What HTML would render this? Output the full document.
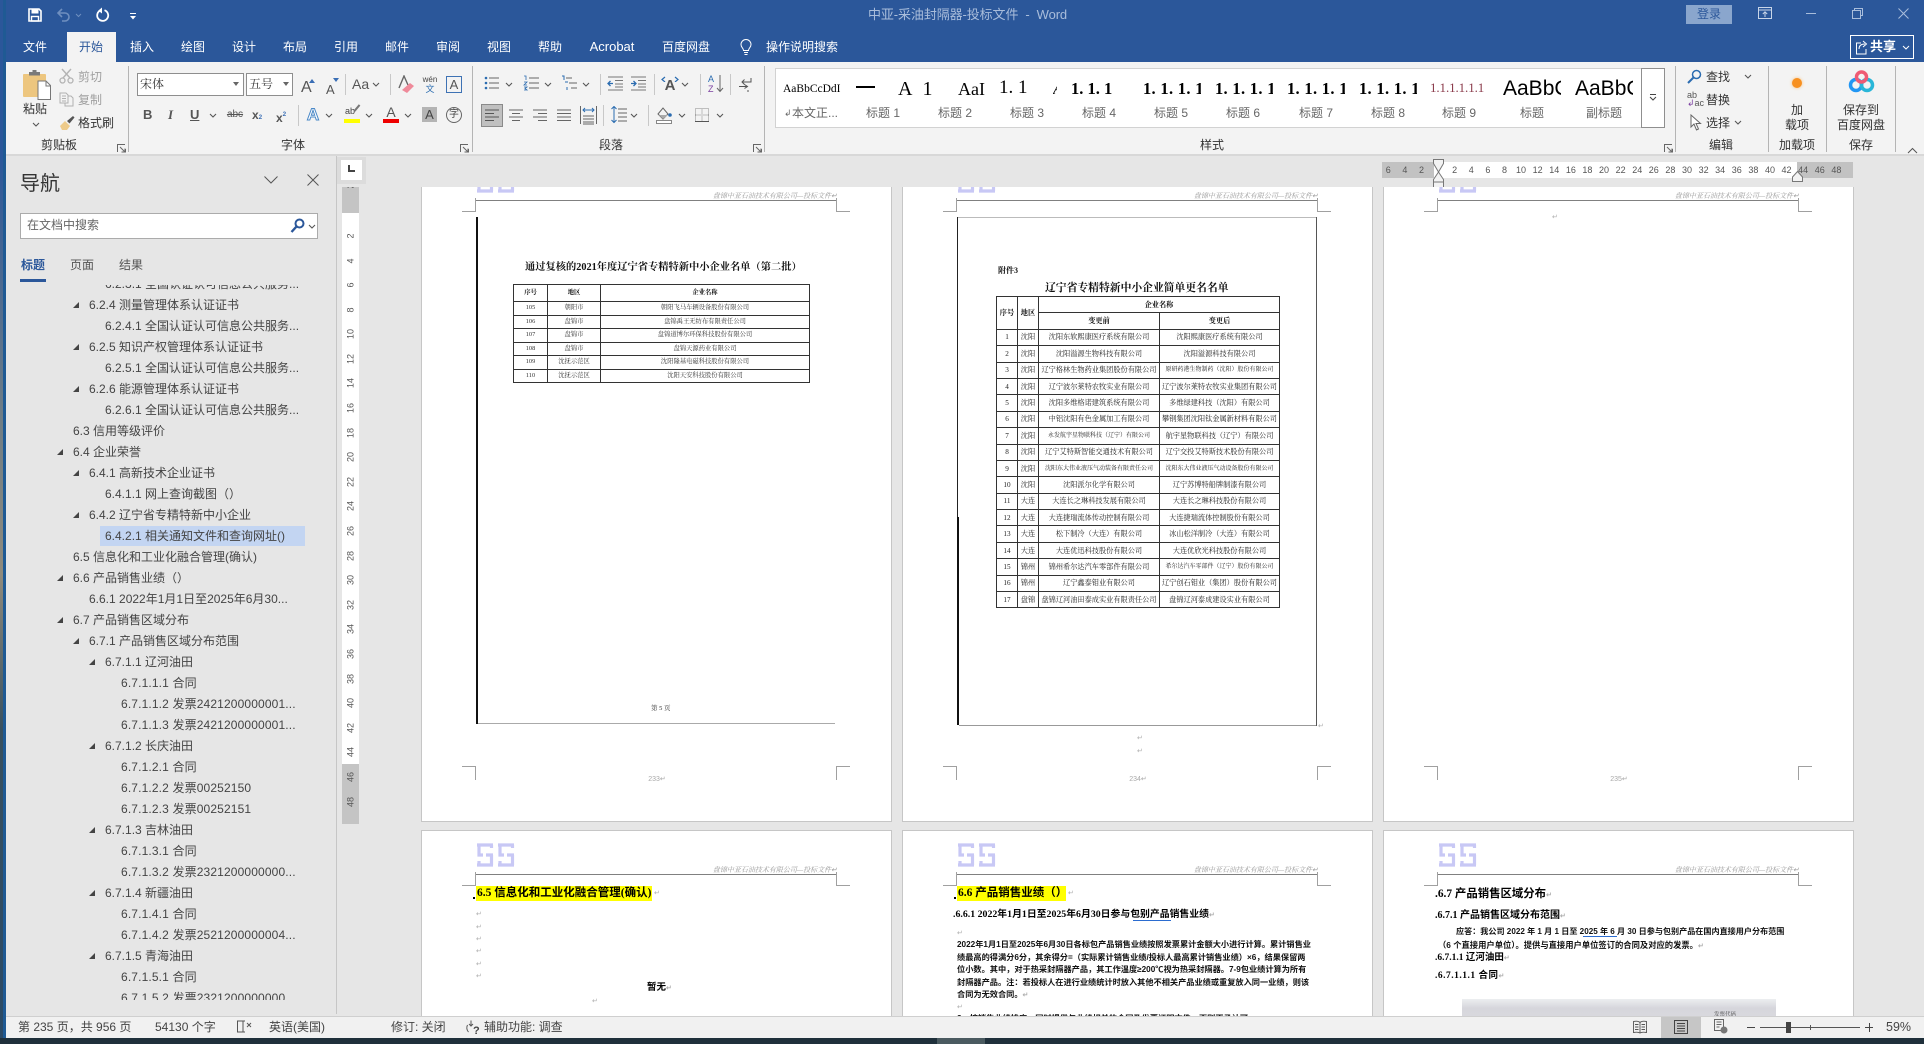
<!DOCTYPE html>
<html lang="zh"><head><meta charset="utf-8"><title>Word</title>
<style>
*{box-sizing:border-box}
html,body{margin:0;padding:0;width:1924px;height:1044px;overflow:hidden;background:#e6e6e6;font-family:"Liberation Sans","Noto Sans CJK SC",sans-serif}
.a{position:absolute;white-space:nowrap}
.c{transform:translateX(-50%)}
.tab{position:absolute;top:38px;color:#fff;font-size:12px;line-height:18px;transform:translateX(-50%);white-space:nowrap}
.r{position:absolute;font-size:12px;line-height:16px;color:#333;white-space:nowrap}
.g{color:#a0a0a0}
.cn{transform:translateX(-50%)}
.sep{position:absolute;width:1px;background:#c8c8c8}
.sep2{position:absolute;width:1px;top:66px;height:86px;background:#b4b4b4}
.sl{position:absolute;top:105px;font-size:12px;line-height:16px;color:#666;transform:translateX(-50%);white-space:nowrap}
.pv{position:absolute;overflow:hidden;white-space:nowrap;color:#000;text-align:left}
.se{font-family:"Liberation Serif","Noto Serif CJK SC",serif}
.n{height:21px;line-height:21px;font-size:12px;color:#444;position:relative;white-space:nowrap}
.l2{padding-left:73px}.l3{padding-left:89px}.l4{padding-left:105px}.l5{padding-left:121px;letter-spacing:.14px}
.n i{position:absolute;top:7px;width:0;height:0;border-bottom:6px solid #444;border-left:6px solid transparent}
.l2 i{left:57px}.l3 i{left:73px}.l4 i{left:89px}
.hr{position:absolute;left:1380px;top:162px;display:flex;font-size:9px;line-height:16px;color:#555}
.hr span{width:16.6px;text-align:center;flex:none}
.vr{position:absolute;left:342px;top:187px;width:17px;height:637px;overflow:hidden;font-size:9px;color:#555}
.vr span{position:absolute;left:0;width:17px;height:12px;line-height:12px;text-align:center;transform:rotate(-90deg)}
.pg{position:absolute;width:471px;height:666px;background:#fff;border:1px solid #c6c6c6;overflow:hidden}
.pg>*{position:absolute}
.hl{left:53px;top:43px;width:361px;height:1px;background:#808080}
.h{right:54px;top:34px;font-size:7px;line-height:10px;font-style:italic;color:#999;white-space:nowrap;font-family:"Liberation Serif","Noto Serif CJK SC",serif}
.m{background:#a0a0a0}
.m1{left:40px;top:54px;width:14px;height:1px}.m2{left:53px;top:41px;width:1px;height:14px}
.m3{left:414px;top:54px;width:14px;height:1px}.m4{left:414px;top:41px;width:1px;height:14px}
.m5{left:40px;top:609px;width:14px;height:1px}.m6{left:53px;top:609px;width:1px;height:14px}
.m7{left:414px;top:609px;width:14px;height:1px}.m8{left:414px;top:609px;width:1px;height:14px}
.pn{left:0;width:470px;top:618px;text-align:center;font-size:7px;line-height:10px;color:#a8a8a8}
.lg{left:55px;top:12px;width:38px;height:24px}
.sc{font-family:"Liberation Serif","Noto Serif CJK SC",serif;color:#222;filter:blur(.2px);white-space:nowrap}
table{border-collapse:collapse;table-layout:fixed}
td{border:1px solid #333;padding:0;text-align:center;overflow:hidden;white-space:nowrap}
.t1 td{font-size:6.3px;color:#333;line-height:10px}
.t2 td{font-size:7.2px;color:#222;line-height:10px;height:16.4px}
.sm{font-size:6px!important}
.b{font-weight:700;color:#111!important}
.ret{color:#b0b0b0;font-size:7px;line-height:9px;white-space:nowrap}
.hd{font-family:"Liberation Serif","Noto Sans CJK SC",sans-serif;font-weight:700;color:#000;white-space:nowrap}
.ye{background:#ff0;height:15px;line-height:15px;font-size:11.5px;padding-left:1px;overflow:hidden}
.bd{font-weight:700;color:#111;font-size:8.2px;line-height:10px;white-space:nowrap;font-family:"Liberation Sans","Noto Sans CJK SC",sans-serif}
.st{position:absolute;top:1019px;font-size:12px;line-height:17px;color:#444;white-space:nowrap}
</style></head><body>
<svg width="0" height="0" style="position:absolute">
<symbol id="ch" viewBox="0 0 8 5"><path d="M1 1l3 3 3-3" stroke="#555" stroke-width="1.1" fill="none"/></symbol>
<symbol id="la" viewBox="0 0 9 9"><path d="M.5 8V.5H8M3 3l5 5M8 4.5V8H4.5M8.5 5v3.5" stroke="#666" fill="none"/></symbol>
<symbol id="lg" viewBox="0 0 38 24"><g fill="none" stroke="#c8c8f5" stroke-width="3.2"><path d="M0 2h16M2 2v10h4M9 12h7M14.5 2v3M14.500 12v10M0 22h16M2 18v4"/><path d="M21 2h16M23 2v10h4M30 12h7M35.500 2v3M35.500 12v10M21 22h16M23 18v4"/></g></symbol>
</svg>

<!-- title bar -->
<div class="a" style="left:0;top:0;width:1924px;height:62px;background:#2b579a"></div>
<svg class="a" style="left:27px;top:7px" width="16" height="16" viewBox="0 0 16 16"><path d="M2 2h10l2 2v10H2z" fill="none" stroke="#fff" stroke-width="1.6"/><rect x="4.5" y="2" width="7" height="4.5" fill="#fff"/><rect x="4.5" y="9.5" width="7" height="4.5" fill="none" stroke="#fff" stroke-width="1.4"/></svg>
<svg class="a" style="left:56px;top:8px" width="26" height="14" viewBox="0 0 26 14"><path d="M6 1L2 5l4 4M2 5h7a4 4 0 0 1 0 8H6" fill="none" stroke="#6f8fbf" stroke-width="1.6"/><path d="M20 6l2.5 2.5L25 6" fill="none" stroke="#6f8fbf"/></svg>
<svg class="a" style="left:95px;top:7px" width="16" height="16" viewBox="0 0 16 16"><path d="M9.5 3.2A5.5 5.5 0 1 1 5 3.6" fill="none" stroke="#fff" stroke-width="1.8"/><path d="M7 .5v6L3.2 3.6z" fill="#fff"/></svg>
<svg class="a" style="left:129px;top:13px" width="8" height="7" viewBox="0 0 8 7"><path d="M1 .5h6" stroke="#fff"/><path d="M1 3h6L4 6.5z" fill="#fff"/></svg>
<div class="a" style="left:868px;top:6px;font-size:13px;line-height:18px;color:#a9bddb;letter-spacing:-.1px">中亚-采油封隔器-投标文件&nbsp; -&nbsp; Word</div>
<div class="a" style="left:1686px;top:5px;width:46px;height:19px;background:#8aa6cd;color:#2b579a;font-size:12px;line-height:19px;text-align:center">登录</div>
<svg class="a" style="left:1758px;top:7px" width="14" height="12" viewBox="0 0 14 12"><path d="M.5.5h13v11H.5zM.5 3h13M7 10V5M4.8 7L7 4.8 9.2 7" fill="none" stroke="#c8d5e8"/></svg>
<div class="a" style="left:1806px;top:13px;width:10px;height:1px;background:#a9bddb"></div>
<svg class="a" style="left:1852px;top:8px" width="11" height="11" viewBox="0 0 11 11"><path d="M2.5 2.5V.5h8v7h-2M.5 2.5h8v8h-8z" fill="none" stroke="#a9bddb"/></svg>
<svg class="a" style="left:1898px;top:8px" width="11" height="11" viewBox="0 0 11 11"><path d="M.5.5l10 10M10.500.5l-10 10" stroke="#a9bddb"/></svg>

<div class="a" style="left:67px;top:32px;width:49px;height:30px;background:#f3f3f3"></div>
<div class="tab" style="left:35px">文件</div>
<div class="tab" style="left:91px;color:#2b579a">开始</div>
<div class="tab" style="left:142px">插入</div>
<div class="tab" style="left:193px">绘图</div>
<div class="tab" style="left:244px">设计</div>
<div class="tab" style="left:295px">布局</div>
<div class="tab" style="left:346px">引用</div>
<div class="tab" style="left:397px">邮件</div>
<div class="tab" style="left:448px">审阅</div>
<div class="tab" style="left:499px">视图</div>
<div class="tab" style="left:550px">帮助</div>
<div class="tab" style="left:612px;font-size:13px">Acrobat</div>
<div class="tab" style="left:686px">百度网盘</div>
<svg class="a" style="left:739px;top:38px" width="14" height="18" viewBox="0 0 14 18"><path d="M4.500 12.500C4.500 10 2 9.500 2 6.500a5 5 0 0 1 10 0c0 3-2.500 3.500-2.500 6zM5 14.500h4M5.500 16.500h3" fill="none" stroke="#fff"/></svg>
<div class="tab" style="left:802px">操作说明搜索</div>
<div class="a" style="left:1850px;top:35px;width:64px;height:24px;border:1px solid #fff"></div>
<svg class="a" style="left:1855px;top:40px" width="14" height="15" viewBox="0 0 14 15"><path d="M6 3H1.500v11H11V9M4 9c0-4 3-5 6-5M8 1l3.500 3L8 7" fill="none" stroke="#fff"/></svg>
<div class="a" style="left:1870px;top:38px;color:#fff;font-size:13px;line-height:18px;font-weight:700">共享</div>
<svg class="a" style="left:1902px;top:45px" width="8" height="5"><path d="M1 1l3 3 3-3" stroke="#fff" fill="none"/></svg>

<!-- ribbon -->
<div class="a" style="left:0;top:62px;width:1924px;height:94px;background:#f3f3f3;border-bottom:2px solid #d8d8d8"></div>
<div class="sep2" style="left:128px"></div><div class="sep2" style="left:472px"></div><div class="sep2" style="left:764px"></div><div class="sep2" style="left:1675px"></div><div class="sep2" style="left:1768px"></div><div class="sep2" style="left:1826px"></div><div class="sep2" style="left:1895px"></div>

<!-- clipboard -->
<svg class="a" style="left:22px;top:69px" width="30" height="32" viewBox="0 0 30 32"><rect x="1" y="5" width="23" height="23" rx="1" fill="#edc67f"/><path d="M7 5V3h3.500V1h4v2H18v3.500H7z" fill="#7a7a7a"/><path d="M16 12h8l4.500 4.500V30.500H16z" fill="#fff" stroke="#777"/><path d="M24 12v5h4.500" fill="none" stroke="#777"/></svg>
<div class="r cn" style="left:35px;top:101px">粘贴</div>
<svg class="a" style="left:32px;top:122px" width="8" height="5"><use href="#ch"/></svg>
<svg class="a" style="left:59px;top:68px" width="15" height="16" viewBox="0 0 15 16"><path d="M3 1l8 9M12 1L4 10" stroke="#b4b4b4" stroke-width="1.4"/><circle cx="3.500" cy="12.500" r="2.500" fill="none" stroke="#b4b4b4" stroke-width="1.300"/><circle cx="11.500" cy="12.500" r="2.500" fill="none" stroke="#b4b4b4" stroke-width="1.300"/></svg>
<div class="r g" style="left:78px;top:69px">剪切</div>
<svg class="a" style="left:59px;top:92px" width="15" height="15" viewBox="0 0 15 15"><path d="M1 1h6l2 2v8H1zM9 4h3l2 2v8H6v-3M3 4h4M3 6.500h4M3 9h4" fill="none" stroke="#b0b0b0"/></svg>
<div class="r g" style="left:78px;top:92px">复制</div>
<svg class="a" style="left:59px;top:115px" width="16" height="16" viewBox="0 0 16 16"><path d="M1 11l5-5 5 5-3 4H3z" fill="#eecb8a"/><path d="M8 6l6-5 1.500 1.500-5 6z" fill="#555"/></svg>
<div class="r" style="left:78px;top:115px">格式刷</div>
<div class="r cn" style="left:59px;top:137px">剪贴板</div>
<svg class="a" style="left:117px;top:144px" width="9" height="9"><use href="#la"/></svg>

<!-- font -->
<div class="a" style="left:137px;top:73px;width:107px;height:23px;background:#fff;border:1px solid #8e8e8e"></div>
<div class="r" style="left:140px;top:76px;font-family:'Noto Serif CJK SC',serif">宋体</div>
<div class="a" style="left:233px;top:82px;width:0;height:0;border:3px solid transparent;border-top:4px solid #666"></div>
<div class="a" style="left:246px;top:73px;width:47px;height:23px;background:#fff;border:1px solid #8e8e8e"></div>
<div class="r" style="left:249px;top:76px;font-family:'Noto Serif CJK SC',serif">五号</div>
<div class="a" style="left:283px;top:82px;width:0;height:0;border:3px solid transparent;border-top:4px solid #666"></div>
<div class="a" style="left:301px;top:79px;font-size:16px;line-height:18px;color:#555">A</div><div class="a" style="left:309px;top:76px;width:0;height:0;border:3px solid transparent;border-bottom:4px solid #3a6eb5"></div>
<div class="a" style="left:326px;top:82px;font-size:13px;line-height:15px;color:#555">A</div><div class="a" style="left:333px;top:78px;width:0;height:0;border:3px solid transparent;border-top:4px solid #3a6eb5"></div>
<div class="sep" style="left:345px;top:74px;height:21px"></div>
<div class="a" style="left:352px;top:76px;font-size:14px;line-height:16px;color:#555">Aa</div><svg class="a" style="left:372px;top:82px" width="8" height="5"><use href="#ch"/></svg>
<div class="sep" style="left:390px;top:74px;height:21px"></div>
<svg class="a" style="left:398px;top:75px" width="17" height="18" viewBox="0 0 17 18"><path d="M1 13L6 1l4 9" fill="none" stroke="#666" stroke-width="1.4"/><path d="M4 15l8-7 4 3-7 7z" fill="#ef8a9a"/></svg>
<div class="a c" style="left:430px;top:75px;font-size:8px;line-height:9px;color:#444">wén</div><div class="a c" style="left:430px;top:84px;font-size:9px;line-height:10px;color:#2b6cb0">文</div>
<div class="a" style="left:446px;top:76px;width:16px;height:17px;border:1px solid #3e72b4;font-size:13px;line-height:15px;text-align:center;color:#555">A</div>
<div class="a" style="left:143px;top:106px;font-size:13px;line-height:18px;font-weight:700;color:#555;font-family:'Liberation Sans'">B</div>
<div class="a" style="left:168px;top:106px;font-size:13px;line-height:18px;font-style:italic;font-family:'Liberation Serif';font-weight:700;color:#555">I</div>
<div class="a" style="left:190px;top:106px;font-size:13px;line-height:18px;font-weight:700;color:#555;text-decoration:underline">U</div>
<svg class="a" style="left:209px;top:113px" width="8" height="5"><use href="#ch"/></svg>
<div class="a c" style="left:235px;top:108px;font-size:10px;line-height:14px;color:#555;text-decoration:line-through">abc</div>
<div class="a" style="left:252px;top:107px;font-size:12px;line-height:16px;color:#555;font-weight:700">x<span style="font-size:6px;color:#3a6eb5">2</span></div>
<div class="a" style="left:276px;top:107px;font-size:12px;line-height:16px;color:#555;font-weight:700">x<span style="font-size:6px;color:#3a6eb5;vertical-align:6px">2</span></div>
<div class="sep" style="left:298px;top:105px;height:21px"></div>
<div class="a c" style="left:313px;top:105px;font-size:17px;line-height:20px;color:#fff;font-weight:700;-webkit-text-stroke:1px #4a88c7">A</div><svg class="a" style="left:325px;top:113px" width="8" height="5"><use href="#ch"/></svg>
<div class="a c" style="left:350px;top:106px;font-size:9px;line-height:11px;color:#444">ab</div><div class="a" style="left:344px;top:119px;width:16px;height:4px;background:#ff0"></div>
<div class="a" style="left:353px;top:107px;width:8px;height:2px;background:#777;transform:rotate(-50deg)"></div>
<svg class="a" style="left:365px;top:113px" width="8" height="5"><use href="#ch"/></svg>
<div class="a c" style="left:391px;top:104px;font-size:14px;line-height:16px;color:#555">A</div><div class="a" style="left:383px;top:119px;width:16px;height:4px;background:#e00"></div>
<svg class="a" style="left:404px;top:113px" width="8" height="5"><use href="#ch"/></svg>
<div class="a" style="left:422px;top:107px;width:15px;height:15px;background:#b4b4b4;color:#444;font-size:13px;line-height:15px;text-align:center">A</div>
<div class="a" style="left:446px;top:107px;width:16px;height:16px;border:1px solid #666;border-radius:50%;font-size:10px;line-height:14px;text-align:center;color:#444">字</div>
<div class="r cn" style="left:293px;top:137px">字体</div>
<svg class="a" style="left:460px;top:144px" width="9" height="9"><use href="#la"/></svg>

<!-- paragraph -->
<svg class="a" style="left:484px;top:75px" width="16" height="16" viewBox="0 0 16 16"><path d="M5 3h10M5 8h10M5 13h10" stroke="#666"/><circle cx="2" cy="3" r="1.300" fill="#2b6cb0"/><circle cx="2" cy="8" r="1.300" fill="#2b6cb0"/><circle cx="2" cy="13" r="1.300" fill="#2b6cb0"/></svg><svg class="a" style="left:505px;top:82px" width="8" height="5"><use href="#ch"/></svg>
<svg class="a" style="left:523px;top:75px" width="16" height="16" viewBox="0 0 16 16"><path d="M6 3h10M6 8h10M6 13h10" stroke="#666"/><path d="M1 1h2v4M1 7h3l-3 3h3M1 12h3l-2 1.500 2 1.500H1" fill="none" stroke="#2b6cb0" stroke-width=".8"/></svg><svg class="a" style="left:544px;top:82px" width="8" height="5"><use href="#ch"/></svg>
<svg class="a" style="left:561px;top:75px" width="16" height="16" viewBox="0 0 16 16"><path d="M5 3h6M8 8h8M10 13h6" stroke="#666"/><path d="M1 1h2v4M4 7h3M6 12v3" fill="none" stroke="#2b6cb0"/></svg><svg class="a" style="left:582px;top:82px" width="8" height="5"><use href="#ch"/></svg>
<div class="sep" style="left:600px;top:74px;height:21px"></div>
<svg class="a" style="left:607px;top:76px" width="16" height="15" viewBox="0 0 16 15"><path d="M1 1h15M8 4.500h8M8 8h8M8 11h8M1 14h15" stroke="#777"/><path d="M6 7.500H1M3.500 5L1 7.500 3.500 10" fill="none" stroke="#2b6cb0" stroke-width="1.300"/></svg>
<svg class="a" style="left:630px;top:76px" width="16" height="15" viewBox="0 0 16 15"><path d="M1 1h15M8 4.500h8M8 8h8M8 11h8M1 14h15" stroke="#777"/><path d="M1 7.500h5M3.500 5L6 7.500 3.500 10" fill="none" stroke="#2b6cb0" stroke-width="1.300"/></svg>
<div class="sep" style="left:654px;top:74px;height:21px"></div>
<div class="a c" style="left:670px;top:78px;font-size:15px;line-height:15px;font-weight:700;color:#555">A</div><svg class="a" style="left:661px;top:76px" width="18" height="6" viewBox="0 0 18 6"><path d="M4 1L1 3.500 4 6M14 1l3 2.500L14 6" fill="none" stroke="#2b6cb0" stroke-width="1.200"/></svg><svg class="a" style="left:681px;top:82px" width="8" height="5"><use href="#ch"/></svg>
<div class="sep" style="left:700px;top:74px;height:21px"></div>
<div class="a" style="left:708px;top:74px;font-size:9px;line-height:10px;color:#2b6cb0">A</div><div class="a" style="left:708px;top:84px;font-size:9px;line-height:10px;color:#7b3fa0">Z</div>
<svg class="a" style="left:716px;top:75px" width="8" height="18" viewBox="0 0 8 18"><path d="M4 0v16M1 13l3 3.500L7 13" fill="none" stroke="#666"/></svg>
<div class="sep" style="left:730px;top:74px;height:21px"></div>
<svg class="a" style="left:739px;top:77px" width="13" height="15" viewBox="0 0 13 15"><path d="M12 1v4H3M5.500 2.500L3 5l2.500 2.500M0 9.500h8M5.500 7.500l3 2-3 2M9 13v2" fill="none" stroke="#555"/></svg>
<div class="a" style="left:481px;top:104px;width:22px;height:23px;background:#c0c0c0;border:1px solid #8a8a8a"></div>
<svg class="a" style="left:484px;top:109px" width="16" height="13" viewBox="0 0 16 13"><path d="M1 1h14M1 4.500h9M1 8h14M1 11.500h9" stroke="#555"/></svg>
<svg class="a" style="left:508px;top:109px" width="16" height="13" viewBox="0 0 16 13"><path d="M1 1h14M4 4.500h8M1 8h14M4 11.500h8" stroke="#666"/></svg>
<svg class="a" style="left:532px;top:109px" width="16" height="13" viewBox="0 0 16 13"><path d="M1 1h14M6 4.500h9M1 8h14M6 11.500h9" stroke="#666"/></svg>
<svg class="a" style="left:556px;top:109px" width="16" height="13" viewBox="0 0 16 13"><path d="M1 1h14M1 4.500h14M1 8h14M1 11.500h14" stroke="#666"/></svg>
<svg class="a" style="left:580px;top:105px" width="17" height="20" viewBox="0 0 17 20"><path d="M.5 1v18M16.500 1v18M3 11h11M3 14h11M3 17h11M3 19h11" stroke="#666"/><path d="M3 5h11M5 3L3 5l2 2M12 3l2 2-2 2" fill="none" stroke="#2b6cb0"/></svg>
<div class="sep" style="left:603px;top:105px;height:21px"></div>
<svg class="a" style="left:611px;top:106px" width="16" height="18" viewBox="0 0 16 18"><path d="M7 3h9M7 7h9M7 11h9M7 15h9" stroke="#666"/><path d="M3 0v17M.5 3L3 .5 5.500 3M.5 14L3 16.500 5.500 14" fill="none" stroke="#2b6cb0"/></svg><svg class="a" style="left:630px;top:113px" width="8" height="5"><use href="#ch"/></svg>
<div class="sep" style="left:648px;top:105px;height:21px"></div>
<svg class="a" style="left:656px;top:106px" width="16" height="18" viewBox="0 0 16 18"><path d="M2 8l5-6 5 6-5 5z" fill="none" stroke="#666"/><path d="M3 9h9l-5 4z" fill="#aaa"/><circle cx="14" cy="9" r="1.800" fill="#2b6cb0"/><rect x=".5" y="14.500" width="15" height="3" fill="#fff" stroke="#888"/></svg><svg class="a" style="left:678px;top:113px" width="8" height="5"><use href="#ch"/></svg>
<svg class="a" style="left:695px;top:108px" width="14" height="14" viewBox="0 0 14 14"><path d="M.5.500h13v13H.5zM7 .5v13M.5 7h13" fill="none" stroke="#888" stroke-dasharray="1 1"/><path d="M0 13.500h14" stroke="#555"/></svg><svg class="a" style="left:716px;top:113px" width="8" height="5"><use href="#ch"/></svg>
<div class="r cn" style="left:611px;top:137px">段落</div>
<svg class="a" style="left:753px;top:144px" width="9" height="9"><use href="#la"/></svg>

<!-- styles -->
<div class="a" style="left:775px;top:68px;width:867px;height:60px;background:#fff;border:1px solid #d2d2d2"></div>
<div class="a" style="left:1641px;top:68px;width:24px;height:60px;background:#fff;border:1px solid #8f8f8f"></div>
<svg class="a" style="left:1649px;top:94px" width="8" height="8" viewBox="0 0 8 8"><path d="M1 .5h6M1 3l3 3 3-3" fill="none" stroke="#444"/></svg>
<div class="pv se" style="left:783px;top:80px;width:59px;font-size:11.5px;line-height:18px">AaBbCcDdI</div>
<div class="a" style="left:856px;top:86px;width:19px;height:1.500px;background:#000"></div>
<div class="pv se" style="left:898px;top:75px;width:40px;font-size:20px;line-height:28px">A&nbsp;&nbsp;1</div>
<div class="pv se" style="left:958px;top:76px;width:29px;font-size:18px;line-height:26px">AaI</div>
<div class="pv se" style="left:999px;top:75px;width:33px;font-size:19px;line-height:26px">1. 1</div>
<div class="pv se" style="left:1053px;top:77px;width:4px;font-size:17px;line-height:24px;font-style:italic">A</div>
<div class="pv se" style="left:1071px;top:78px;width:46px;font-size:16.500px;line-height:22px;font-weight:700">1. 1. 1</div>
<div class="pv se" style="left:1143px;top:78px;width:58px;font-size:16.500px;line-height:22px;font-weight:700;letter-spacing:.3px">1. 1. 1. 1</div>
<div class="pv se" style="left:1215px;top:78px;width:58px;font-size:16.500px;line-height:22px;font-weight:700;letter-spacing:.3px">1. 1. 1. 1</div>
<div class="pv se" style="left:1287px;top:78px;width:58px;font-size:16.500px;line-height:22px;font-weight:700;letter-spacing:.3px">1. 1. 1. 1</div>
<div class="pv se" style="left:1359px;top:78px;width:58px;font-size:16.500px;line-height:22px;font-weight:700;letter-spacing:.3px">1. 1. 1. 1</div>
<div class="pv se" style="left:1430px;top:80px;width:60px;font-size:13px;line-height:16px;color:#8a3a4a;letter-spacing:-.1px">1.1.1.1.1.1</div>
<div class="pv" style="left:1503px;top:75px;width:58px;font-size:21px;line-height:28px">AaBbC</div>
<div class="pv" style="left:1575px;top:75px;width:58px;font-size:21px;line-height:28px">AaBbC</div>
<div class="sl" style="left:815px">本文正...</div><div class="a" style="left:784px;top:107px;font-size:9px;line-height:12px;color:#666">↲</div>
<div class="sl" style="left:883px">标题 1</div><div class="sl" style="left:955px">标题 2</div><div class="sl" style="left:1027px">标题 3</div><div class="sl" style="left:1099px">标题 4</div><div class="sl" style="left:1171px">标题 5</div><div class="sl" style="left:1243px">标题 6</div><div class="sl" style="left:1316px">标题 7</div><div class="sl" style="left:1388px">标题 8</div><div class="sl" style="left:1459px">标题 9</div><div class="sl" style="left:1532px">标题</div><div class="sl" style="left:1604px">副标题</div>
<div class="r cn" style="left:1212px;top:137px">样式</div>
<svg class="a" style="left:1664px;top:144px" width="9" height="9"><use href="#la"/></svg>

<!-- editing -->
<svg class="a" style="left:1687px;top:69px" width="15" height="15" viewBox="0 0 15 15"><circle cx="9.500" cy="5.500" r="4" fill="none" stroke="#2b6cb0" stroke-width="1.500"/><path d="M6.500 8.500L1 14" stroke="#2b6cb0" stroke-width="2"/></svg>
<div class="r" style="left:1706px;top:69px">查找</div><svg class="a" style="left:1744px;top:74px" width="8" height="5"><use href="#ch"/></svg>
<div class="a" style="left:1687px;top:91px;font-size:9px;line-height:8px;color:#555">ab<br><span style="color:#7b3fa0">↲</span>ac</div>
<div class="r" style="left:1706px;top:92px">替换</div>
<svg class="a" style="left:1690px;top:114px" width="12" height="17" viewBox="0 0 12 17"><path d="M1 1v12l3-3 2.500 6 2-1L6 9.500h4.500z" fill="#fff" stroke="#666"/></svg>
<div class="r" style="left:1706px;top:115px">选择</div><svg class="a" style="left:1734px;top:120px" width="8" height="5"><use href="#ch"/></svg>
<div class="r cn" style="left:1721px;top:137px">编辑</div>
<div class="a" style="left:1792px;top:78px;width:10px;height:10px;border-radius:50%;background:#f79020;box-shadow:0 0 3px #fbc07a"></div>
<div class="r cn" style="left:1797px;top:102px">加</div><div class="r cn" style="left:1797px;top:117px">载项</div>
<div class="r cn" style="left:1797px;top:137px">加载项</div>
<svg class="a" style="left:1848px;top:70px" width="27" height="24" viewBox="0 0 27 24"><circle cx="8" cy="15" r="5.500" fill="none" stroke="#2196f3" stroke-width="3.500"/><circle cx="19" cy="15" r="5.500" fill="none" stroke="#29b6d8" stroke-width="3.500"/><circle cx="13.500" cy="7" r="5" fill="none" stroke="#ef5b74" stroke-width="3.500"/></svg>
<div class="r cn" style="left:1861px;top:102px">保存到</div><div class="r cn" style="left:1861px;top:117px">百度网盘</div>
<div class="r cn" style="left:1861px;top:137px">保存</div>
<svg class="a" style="left:1907px;top:147px" width="11" height="7" viewBox="0 0 11 7"><path d="M1 6l4.500-4.500L10 6" fill="none" stroke="#555"/></svg>

<!-- rulers -->
<div class="a" style="left:1382px;top:162px;width:471px;height:16px;background:#c2c2c2"></div>
<div class="a" style="left:1434px;top:162px;width:363px;height:16px;background:#fff"></div>
<div class="hr"><span>6</span><span>4</span><span>2</span><span></span><span>2</span><span>4</span><span>6</span><span>8</span><span>10</span><span>12</span><span>14</span><span>16</span><span>18</span><span>20</span><span>22</span><span>24</span><span>26</span><span>28</span><span>30</span><span>32</span><span>34</span><span>36</span><span>38</span><span>40</span><span>42</span><span>44</span><span>46</span><span>48</span></div>
<svg class="a" style="left:1432px;top:159px" width="13" height="29" viewBox="0 0 13 29"><path d="M1.500.5h10v4L6.500 13 1.500 4.500z" fill="#f3f3f3" stroke="#777"/><path d="M6.500 13l5 7.500v2.500h-10v-2.500z" fill="#f3f3f3" stroke="#777"/><rect x="1.500" y="23" width="10" height="5.500" fill="#f3f3f3" stroke="#777"/></svg>
<svg class="a" style="left:1792px;top:171px" width="11" height="11" viewBox="0 0 11 11"><path d="M5.500.5L10.500 6v4.500H.5V6z" fill="#f3f3f3" stroke="#777"/></svg>

<div class="a" style="left:337px;top:157px;width:29px;height:27px;background:#dcdcdc"></div>
<div class="a" style="left:341px;top:160px;width:21px;height:20px;background:#fff"></div>
<svg class="a" style="left:348px;top:165px" width="7" height="7" viewBox="0 0 7 7"><path d="M1 0v6h6" fill="none" stroke="#444" stroke-width="2"/></svg>
<div class="a" style="left:342px;top:187px;width:17px;height:26px;background:#c4c4c4"></div>
<div class="a" style="left:342px;top:213px;width:17px;height:551px;background:#fff"></div>
<div class="a" style="left:342px;top:764px;width:17px;height:60px;background:#c4c4c4"></div>
<div class="vr">
<span style="top:-7px">2</span><span style="top:43px">2</span><span style="top:68px">4</span><span style="top:92px">6</span><span style="top:117px">8</span><span style="top:141px">10</span><span style="top:166px">12</span><span style="top:190px">14</span><span style="top:215px">16</span><span style="top:240px">18</span><span style="top:264px">20</span><span style="top:289px">22</span><span style="top:313px">24</span><span style="top:338px">26</span><span style="top:363px">28</span><span style="top:387px">30</span><span style="top:412px">32</span><span style="top:436px">34</span><span style="top:461px">36</span><span style="top:486px">38</span><span style="top:510px">40</span><span style="top:535px">42</span><span style="top:559px">44</span><span style="top:584px">46</span><span style="top:609px">48</span>
</div>

<!-- navigation -->
<div class="a" style="left:0;top:0;width:3px;height:1044px;background:linear-gradient(#2b579a 0,#2b579a 15%,#6f7d85 40%,#8f8a7c 55%,#39505e 70%,#2b4a66 100%)"></div>
<div class="a" style="left:3px;top:0;width:3px;height:1044px;background:#1f5a94"></div>
<div class="a" style="left:336px;top:156px;width:1px;height:858px;background:#c6c6c6"></div>
<div class="a" style="left:20px;top:171px;font-size:20px;line-height:27px;color:#333">导航</div>
<svg class="a" style="left:264px;top:176px" width="14" height="8" viewBox="0 0 14 8"><path d="M.5.5L7 7 13.500.5" fill="none" stroke="#555"/></svg>
<svg class="a" style="left:307px;top:174px" width="12" height="12" viewBox="0 0 12 12"><path d="M.5.5l11 11M11.500.5l-11 11" stroke="#555"/></svg>
<div class="a" style="left:20px;top:213px;width:298px;height:26px;background:#fff;border:1px solid #ababab"></div>
<div class="a" style="left:27px;top:215px;font-size:12px;line-height:20px;color:#666">在文档中搜索</div>
<svg class="a" style="left:290px;top:218px" width="15" height="15" viewBox="0 0 15 15"><circle cx="9.500" cy="5.500" r="4" fill="none" stroke="#2b579a" stroke-width="2"/><path d="M6.500 8.500L1.500 14" stroke="#2b579a" stroke-width="2.400"/></svg>
<svg class="a" style="left:308px;top:224px" width="8" height="5"><use href="#ch"/></svg>
<div class="a" style="left:21px;top:256px;font-size:12px;line-height:18px;color:#2b579a;font-weight:700">标题</div>
<div class="a" style="left:20px;top:279px;width:26px;height:3px;background:#2b579a"></div>
<div class="a" style="left:70px;top:256px;font-size:12px;line-height:18px;color:#555">页面</div>
<div class="a" style="left:119px;top:256px;font-size:12px;line-height:18px;color:#555">结果</div>
<div class="a" style="left:100px;top:526px;width:205px;height:20px;background:#c3d5f2"></div>
<div class="a" style="left:0;top:285px;width:336px;height:715px;overflow:hidden">
<div style="margin-top:-11px">
<div class="n l4">6.2.3.1 全国认证认可信息公共服务...</div>
<div class="n l3"><i></i>6.2.4 测量管理体系认证证书</div>
<div class="n l4">6.2.4.1 全国认证认可信息公共服务...</div>
<div class="n l3"><i></i>6.2.5 知识产权管理体系认证证书</div>
<div class="n l4">6.2.5.1 全国认证认可信息公共服务...</div>
<div class="n l3"><i></i>6.2.6 能源管理体系认证证书</div>
<div class="n l4">6.2.6.1 全国认证认可信息公共服务...</div>
<div class="n l2">6.3 信用等级评价</div>
<div class="n l2"><i></i>6.4 企业荣誉</div>
<div class="n l3"><i></i>6.4.1 高新技术企业证书</div>
<div class="n l4">6.4.1.1 网上查询截图（）</div>
<div class="n l3"><i></i>6.4.2 辽宁省专精特新中小企业</div>
<div class="n l4">6.4.2.1 相关通知文件和查询网址()</div>
<div class="n l2">6.5 信息化和工业化融合管理(确认)</div>
<div class="n l2"><i></i>6.6 产品销售业绩（）</div>
<div class="n l3">6.6.1 2022年1月1日至2025年6月30...</div>
<div class="n l2"><i></i>6.7 产品销售区域分布</div>
<div class="n l3"><i></i>6.7.1 产品销售区域分布范围</div>
<div class="n l4"><i></i>6.7.1.1 辽河油田</div>
<div class="n l5">6.7.1.1.1 合同</div>
<div class="n l5">6.7.1.1.2 发票2421200000001...</div>
<div class="n l5">6.7.1.1.3 发票2421200000001...</div>
<div class="n l4"><i></i>6.7.1.2 长庆油田</div>
<div class="n l5">6.7.1.2.1 合同</div>
<div class="n l5">6.7.1.2.2 发票00252150</div>
<div class="n l5">6.7.1.2.3 发票00252151</div>
<div class="n l4"><i></i>6.7.1.3 吉林油田</div>
<div class="n l5">6.7.1.3.1 合同</div>
<div class="n l5">6.7.1.3.2 发票2321200000000...</div>
<div class="n l4"><i></i>6.7.1.4 新疆油田</div>
<div class="n l5">6.7.1.4.1 合同</div>
<div class="n l5">6.7.1.4.2 发票2521200000004...</div>
<div class="n l4"><i></i>6.7.1.5 青海油田</div>
<div class="n l5">6.7.1.5.1 合同</div>
<div class="n l5">6.7.1.5.2 发票2321200000000</div>
</div></div>

<!-- document -->
<div class="a" style="left:0;top:187px;width:1924px;height:830px;overflow:hidden">
<!-- page 233 -->
<div class="pg" style="left:421px;top:-31px">
<svg class="lg"><use href="#lg"/></svg><div class="h">盘锦中亚石油技术有限公司—投标文件↵</div><div class="hl"></div>
<div class="m m1"></div><div class="m m2"></div><div class="m m3"></div><div class="m m4"></div><div class="m m5"></div><div class="m m6"></div><div class="m m7"></div><div class="m m8"></div>
<div style="left:54px;top:60px;width:2px;height:507px;background:#111"></div>
<div style="left:56px;top:566px;width:357px;height:1px;background:#aaa"></div>
<div class="sc" style="left:103px;top:104px;font-size:10.250px;line-height:14px;font-weight:700;color:#111">通过复核的2021年度辽宁省专精特新中小企业名单（第二批）</div>
<table class="t1 sc" style="left:91px;top:127px;width:297px">
<col style="width:34px"><col style="width:53px"><col>
<tr style="height:17px"><td class="b">序号</td><td class="b">地区</td><td class="b">企业名称</td></tr>
<tr style="height:13.500px"><td>105</td><td>朝阳市</td><td>朝阳飞马车辆设备股份有限公司</td></tr>
<tr style="height:13.500px"><td>106</td><td>盘锦市</td><td>盘锦禹王无纺布有限责任公司</td></tr>
<tr style="height:13.500px"><td>107</td><td>盘锦市</td><td>盘锦道博尔环保科技股份有限公司</td></tr>
<tr style="height:13.500px"><td>108</td><td>盘锦市</td><td>盘锦天源药业有限公司</td></tr>
<tr style="height:13.500px"><td>109</td><td>沈抚示范区</td><td>沈阳隆基电磁科技股份有限公司</td></tr>
<tr style="height:13.500px"><td>110</td><td>沈抚示范区</td><td>沈阳天安科技股份有限公司</td></tr>
</table>
<div class="sc" style="left:229px;top:547px;font-size:6.500px;line-height:9px;color:#333">第 5 页</div>
<div class="pn">233↵</div>
</div>
<!-- page 234 -->
<div class="pg" style="left:902px;top:-31px">
<svg class="lg"><use href="#lg"/></svg><div class="h">盘锦中亚石油技术有限公司—投标文件↵</div><div class="hl"></div>
<div class="m m1"></div><div class="m m2"></div><div class="m m3"></div><div class="m m4"></div><div class="m m5"></div><div class="m m6"></div><div class="m m7"></div><div class="m m8"></div>
<div style="left:54px;top:60px;width:1px;height:300px;background:#222"></div>
<div style="left:54px;top:360px;width:2px;height:208px;background:#111"></div>
<div style="left:55px;top:60px;width:358px;height:1px;background:#bbb"></div>
<div style="left:413px;top:60px;width:1px;height:509px;background:#555"></div>
<div style="left:56px;top:568px;width:357px;height:1px;background:#999"></div>
<div class="ret" style="left:415px;top:565px">↵</div>
<div class="sc b" style="left:95px;top:108px;font-size:8px;line-height:11px;font-weight:700">附件3</div>
<div class="sc b" style="left:142px;top:124px;font-size:10.800px;line-height:14px;font-weight:700;color:#111">辽宁省专精特新中小企业简单更名名单</div>
<table class="t2 sc" style="left:93px;top:139px;width:284px">
<col style="width:21px"><col style="width:21px"><col style="width:121px"><col>
<tr style="height:16px"><td rowspan="2" class="b">序号</td><td rowspan="2" class="b">地区</td><td colspan="2" class="b">企业名称</td></tr>
<tr style="height:16px"><td class="b">变更前</td><td class="b">变更后</td></tr>
<tr><td>1</td><td>沈阳</td><td>沈阳东软熙康医疗系统有限公司</td><td>沈阳熙康医疗系统有限公司</td></tr>
<tr><td>2</td><td>沈阳</td><td>沈阳溢源生物科技有限公司</td><td>沈阳溢源科技有限公司</td></tr>
<tr><td>3</td><td>沈阳</td><td>辽宁格林生物药业集团股份有限公司</td><td class="sm">原研药港生物制药（沈阳）股份有限公司</td></tr>
<tr><td>4</td><td>沈阳</td><td>辽宁波尔莱特农牧实业有限公司</td><td>辽宁波尔莱特农牧实业集团有限公司</td></tr>
<tr><td>5</td><td>沈阳</td><td>沈阳多维格诺建筑系统有限公司</td><td>多维绿建科技（沈阳）有限公司</td></tr>
<tr><td>6</td><td>沈阳</td><td>中铝沈阳有色金属加工有限公司</td><td>攀钢集团沈阳钛金属新材料有限公司</td></tr>
<tr><td>7</td><td>沈阳</td><td class="sm">永发航宇星物联科技（辽宁）有限公司</td><td>航宇星物联科技（辽宁）有限公司</td></tr>
<tr><td>8</td><td>沈阳</td><td>辽宁艾特斯智能交通技术有限公司</td><td>辽宁交投艾特斯技术股份有限公司</td></tr>
<tr><td>9</td><td>沈阳</td><td class="sm">沈阳东大伟业液压气动装备有限责任公司</td><td class="sm">沈阳东大伟业液压气动设备股份有限公司</td></tr>
<tr><td>10</td><td>沈阳</td><td>沈阳派尔化学有限公司</td><td>辽宁苏博特船牌制漆有限公司</td></tr>
<tr><td>11</td><td>大连</td><td>大连长之琳科技发展有限公司</td><td>大连长之琳科技股份有限公司</td></tr>
<tr><td>12</td><td>大连</td><td>大连捷瑞流体传动控制有限公司</td><td>大连捷瑞流体控制股份有限公司</td></tr>
<tr><td>13</td><td>大连</td><td>松下制冷（大连）有限公司</td><td>冰山松洋制冷（大连）有限公司</td></tr>
<tr><td>14</td><td>大连</td><td>大连优迅科技股份有限公司</td><td>大连优欣光科技股份有限公司</td></tr>
<tr><td>15</td><td>锦州</td><td>锦州希尔达汽车零部件有限公司</td><td class="sm">希尔达汽车零部件（辽宁）股份有限公司</td></tr>
<tr><td>16</td><td>锦州</td><td>辽宁鑫泰钼业有限公司</td><td>辽宁创石钼业（集团）股份有限公司</td></tr>
<tr><td>17</td><td>盘锦</td><td>盘锦辽河油田泰成实业有限责任公司</td><td>盘锦辽河泰成建设实业有限公司</td></tr>
</table>
<div class="ret" style="left:234px;top:577px">↵</div><div class="ret" style="left:234px;top:590px">↵</div>
<div class="pn">234↵</div>
</div>
<!-- page 235 -->
<div class="pg" style="left:1383px;top:-31px">
<svg class="lg"><use href="#lg"/></svg><div class="h">盘锦中亚石油技术有限公司—投标文件↵</div><div class="hl"></div>
<div class="m m1"></div><div class="m m2"></div><div class="m m3"></div><div class="m m4"></div><div class="m m5"></div><div class="m m6"></div><div class="m m7"></div><div class="m m8"></div>
<div class="ret" style="left:168px;top:56px">↵</div>
<div class="pn">235↵</div>
</div>

<!-- row 2 -->
<div class="pg" style="left:421px;top:643px;height:187px">
<svg class="lg"><use href="#lg"/></svg><div class="h">盘锦中亚石油技术有限公司—投标文件↵</div><div class="hl"></div>
<div class="m m1"></div><div class="m m2"></div><div class="m m3"></div><div class="m m4"></div>
<div style="left:51px;top:66px;width:2px;height:2px;background:#000"></div>
<div class="hd ye" style="left:54px;top:55px;width:176px">6.5 信息化和工业化融合管理(确认)</div>
<div class="ret" style="left:232px;top:58px">↵</div>
<div class="ret" style="left:54px;top:79px">↵</div><div class="ret" style="left:54px;top:92px">↵</div><div class="ret" style="left:54px;top:104px">↵</div><div class="ret" style="left:54px;top:116px">↵</div><div class="ret" style="left:54px;top:129px">↵</div><div class="ret" style="left:54px;top:141px">↵</div>
<div class="hd" style="left:225px;top:151px;font-size:9.500px;line-height:13px">暂无<span class="ret">↵</span></div>
<div class="ret" style="left:170px;top:166px">↵</div>
</div>
<div class="pg" style="left:902px;top:643px;height:187px">
<svg class="lg"><use href="#lg"/></svg><div class="h">盘锦中亚石油技术有限公司—投标文件↵</div><div class="hl"></div>
<div class="m m1"></div><div class="m m2"></div><div class="m m3"></div><div class="m m4"></div>
<div style="left:51px;top:66px;width:2px;height:2px;background:#000"></div>
<div class="hd ye" style="left:54px;top:55px;width:109px">6.6 产品销售业绩（）</div>
<div class="ret" style="left:165px;top:58px">↵</div>
<div class="hd" style="left:50px;top:77px;font-size:9.850px;line-height:13px">.6.6.1 2022年1月1日至2025年6月30日参与包别产品销售业绩<span class="ret">↵</span></div>
<div style="left:230px;top:89px;width:38px;height:1px;background:#2b6cd0"></div>
<div class="ret" style="left:54px;top:98px">↵</div>
<div class="bd" style="left:54px;top:109px">2022年1月1日至2025年6月30日各标包产品销售业绩按照发票累计金额大小进行计算。累计销售业</div>
<div class="bd" style="left:54px;top:122px">绩最高的得满分6分，其余得分=（实际累计销售业绩/投标人最高累计销售业绩）×6，结果保留两</div>
<div class="bd" style="left:54px;top:134px">位小数。其中，对于热采封隔器产品，其工作温度≥200℃视为热采封隔器。7-9包业绩计算为所有</div>
<div class="bd" style="left:54px;top:147px">封隔器产品。注：若投标人在进行业绩统计时放入其他不相关产品业绩或重复放入同一业绩，则该</div>
<div class="bd" style="left:54px;top:159px">合同为无效合同。<span class="ret">↵</span></div>
<div class="ret" style="left:54px;top:172px">↵</div>
<div class="bd" style="left:54px;top:183px">3、按销售业绩排序，同时提供与业绩相关的合同及发票证明文件，否则不予认可。</div>
</div>
<div class="pg" style="left:1383px;top:643px;height:187px">
<svg class="lg"><use href="#lg"/></svg><div class="h">盘锦中亚石油技术有限公司—投标文件↵</div><div class="hl"></div>
<div class="m m1"></div><div class="m m2"></div><div class="m m3"></div><div class="m m4"></div>
<div class="hd" style="left:51px;top:56px;font-size:11.400px;line-height:15px">.6.7 产品销售区域分布<span class="ret">↵</span></div>
<div class="hd" style="left:51px;top:78px;font-size:10px;line-height:13px">.6.7.1 产品销售区域分布范围<span class="ret">↵</span></div>
<div class="bd" style="left:72px;top:96px;font-size:8.100px">应答：我公司 2022 年 1 月 1 日至 2025 年 6 月 30 日参与包别产品在国内直接用户分布范围</div>
<div style="left:199px;top:105px;width:34px;height:1px;background:#2b6cd0"></div>
<div class="bd" style="left:54px;top:109px;font-size:8.300px">（6 个直接用户单位）。提供与直接用户单位签订的合同及对应的发票。<span class="ret">↵</span></div>
<div class="hd" style="left:51px;top:121px;font-size:9.500px;line-height:13px">.6.7.1.1 辽河油田<span class="ret">↵</span></div>
<div class="hd" style="left:51px;top:139px;font-size:9.500px;line-height:13px;letter-spacing:.5px">.6.7.1.1.1 合同<span class="ret">↵</span></div>
<div style="left:78px;top:168px;width:314px;height:30px;background:linear-gradient(#eceef0,#d6d6dc 30%,#dcdce0)"></div>
<div class="sc" style="left:330px;top:181px;font-size:5.500px;line-height:7px;color:#444">发票代码</div>
</div>
</div>

<!-- status bar -->
<div class="a" style="left:6px;top:1016px;width:1918px;height:22px;background:#f1f1f1;border-top:1px solid #cfcfcf"></div>
<div class="st" style="left:18px">第 235 页，共 956 页</div>
<div class="st" style="left:155px">54130 个字</div>
<svg class="a" style="left:237px;top:1020px" width="15" height="14" viewBox="0 0 15 14"><path d="M.5 1h5.500v11H.5zM6 1h2M6 12h2" fill="none" stroke="#555"/><path d="M10 3l4 4M14 3l-4 4" stroke="#555"/></svg>
<div class="st" style="left:269px">英语(美国)</div>
<div class="st" style="left:391px">修订: 关闭</div>
<svg class="a" style="left:465px;top:1019px" width="16" height="17" viewBox="0 0 16 17"><path d="M2.500 6a6 6 0 0 0 1 7M6 1.500V7M4 5l2 2 2-2" fill="none" stroke="#555"/><text x="8" y="15" font-size="11" font-weight="700" fill="#444" font-family="Liberation Sans">?</text></svg>
<div class="st" style="left:484px">辅助功能: 调查</div>
<svg class="a" style="left:1633px;top:1020px" width="14" height="14" viewBox="0 0 14 14"><path d="M.5 1.500C3 1 5.500 1 7 2.500 8.500 1 11 1 13.500 1.500v11C11 12 8.500 12 7 13 5.500 12 3 12 .5 12.500zM7 2.500V13M2 4.500h3.500M2 7h3.500M2 9.500h3.500M8.500 4.500H12M8.500 7H12M8.500 9.500H12" fill="none" stroke="#555" stroke-width=".9"/></svg>
<div class="a" style="left:1661px;top:1017px;width:40px;height:21px;background:#c6c6c6"></div>
<svg class="a" style="left:1674px;top:1020px" width="14" height="14" viewBox="0 0 14 14"><path d="M.5.500h13v13H.5zM3 3.500h8M3 6h8M3 8.500h8M3 11h8" fill="none" stroke="#444"/></svg>
<svg class="a" style="left:1714px;top:1019px" width="14" height="15" viewBox="0 0 14 15"><path d="M.5.500h9v11H.5zM2.500 3h5M2.500 5.500h5M2.500 8h3" fill="none" stroke="#666"/><circle cx="10" cy="11" r="3.500" fill="#777"/></svg>
<div class="a" style="left:1747px;top:1027px;width:8px;height:1px;background:#444"></div>
<div class="a" style="left:1760px;top:1027px;width:100px;height:1px;background:#555"></div>
<div class="a" style="left:1786px;top:1022px;width:5px;height:11px;background:#444"></div>
<div class="a" style="left:1810px;top:1025px;width:1px;height:5px;background:#555"></div>
<div class="a" style="left:1865px;top:1027px;width:8px;height:1px;background:#444"></div><div class="a" style="left:1869px;top:1023px;width:1px;height:9px;background:#444"></div>
<div class="st" style="left:1886px;font-size:12.500px">59%</div>
<div class="a" style="left:0;top:1038px;width:1924px;height:6px;background:#1f303b"></div>
<div class="a" style="left:937px;top:1038px;width:48px;height:6px;background:#4a5a60"></div>
</body></html>
